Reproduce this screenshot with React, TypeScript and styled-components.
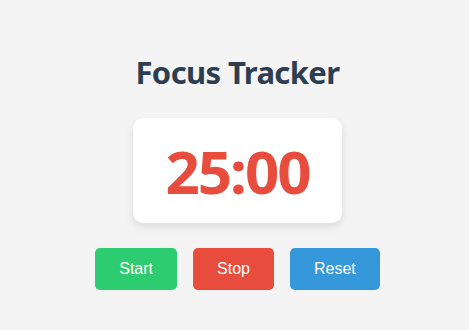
import React from "react"
import styled, { createGlobalStyle } from "styled-components"

const GlobalStyle = createGlobalStyle`
    html, body {
        margin: 0;
        padding: 0;
        background: #f4f4f4;
    }
    body {
        font-family: "Noto Sans", "Open Sans", sans-serif;
    }
`

const Page = styled.main`
    display: flex;
    flex-direction: column;
    align-items: center;
    padding: 52px 0 0 6px;
`

const Title = styled.h1`
    margin: 0;
    font-size: 31px;
    line-height: 40px;
    font-weight: 700;
    letter-spacing: -0.6px;
    color: #2c3e50;
`

const TimerCard = styled.div`
    display: flex;
    align-items: center;
    justify-content: center;
    width: 209px;
    height: 105px;
    margin-top: 26px;
    background: #fff;
    border-radius: 10px;
    box-shadow: 0 4px 8px rgba(0, 0, 0, 0.1);
`

const Time = styled.span`
    font-size: 60px;
    line-height: 1;
    font-weight: 700;
    letter-spacing: -2px;
    color: #e74c3c;
`

const Controls = styled.div`
    display: flex;
    gap: 16px;
    margin-top: 25px;
`

const variants = {
    start: "#2ecc71",
    stop: "#e74c3c",
    reset: "#3498db"
}

const Button = styled.button<{ $variant: keyof typeof variants }>`
    height: 42px;
    padding: 0 24px;
    border: none;
    border-radius: 5px;
    background: ${p => variants[p.$variant]};
    color: #fff;
    font-family: "Liberation Sans", Arial, sans-serif;
    font-size: 16px;
    cursor: pointer;
`

const App = () => (
    <>
        <GlobalStyle />
        <Page>
            <Title>Focus Tracker</Title>
            <TimerCard>
                <Time>25:00</Time>
            </TimerCard>
            <Controls>
                <Button $variant="start">Start</Button>
                <Button $variant="stop">Stop</Button>
                <Button $variant="reset">Reset</Button>
            </Controls>
        </Page>
    </>
)

export default App
